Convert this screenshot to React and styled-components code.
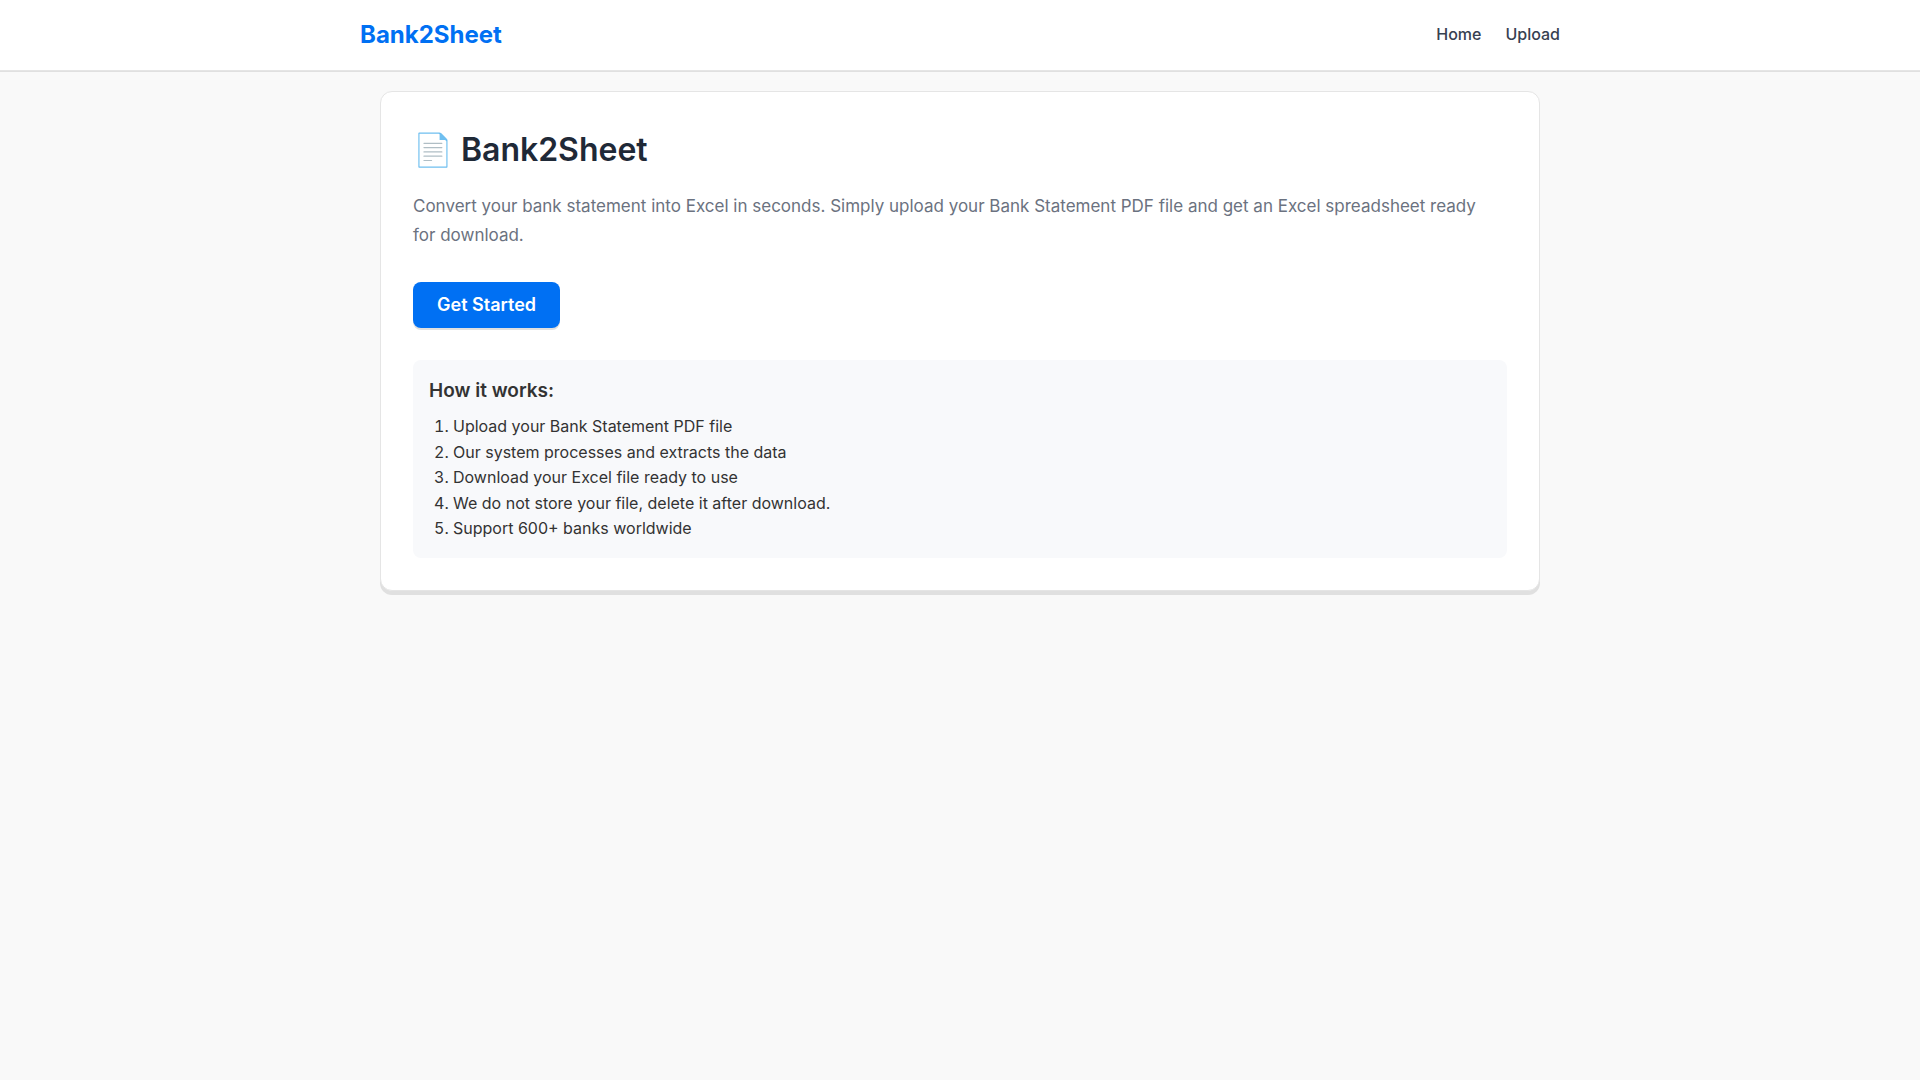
import React from "react";
import styled, { createGlobalStyle } from "styled-components";

const GlobalStyle = createGlobalStyle`
  * {
    box-sizing: border-box;
    margin: 0;
    padding: 0;
  }
  body {
    font-family: Inter, "Noto Color Emoji", sans-serif;
    font-size: 16px;
    line-height: 1.6;
    color: #333333;
    background: #f9f9f9;
  }
`;

const Header = styled.header`
  background: #ffffff;
  border-bottom: 1px solid #e5e5e5;
  box-shadow: 0 1px 0 #e0e0e0;
`;

const Bar = styled.div`
  display: flex;
  align-items: center;
  justify-content: space-between;
  max-width: 1200px;
  margin: 0 auto;
  padding: 16px 0;
`;

const Brand = styled.a`
  font-size: 24px;
  line-height: 38px;
  font-weight: 700;
  color: #0070f3;
  text-decoration: none;
`;

const Nav = styled.nav`
  display: flex;
  gap: 24px;
`;

const NavLink = styled.a`
  font-weight: 500;
  color: #374151;
  text-decoration: none;
`;

const Main = styled.main`
  max-width: 1200px;
  margin: 0 auto;
  padding: 20px;
`;

const Card = styled.section`
  padding: 32px;
  background: #ffffff;
  border: 1px solid #e5e5e5;
  border-radius: 12px;
  box-shadow: 0 4px 0 #e0e0e0;
`;

const Title = styled.h1`
  margin-bottom: 16px;
  font-size: 32px;
  line-height: 52px;
  font-weight: 600;
  color: #1f2937;
`;

const Lead = styled.p`
  margin-bottom: 32px;
  font-size: 17px;
  line-height: 29px;
  color: #6b7280;
`;

const StartButton = styled.button`
  display: block;
  margin-bottom: 32px;
  padding: 12px 24px;
  font-family: inherit;
  font-size: 18px;
  line-height: 22px;
  font-weight: 600;
  color: #ffffff;
  background: #0070f3;
  border: none;
  border-radius: 8px;
  box-shadow: 0 2px 0 #e0e0e0;
  cursor: pointer;
`;

const Panel = styled.section`
  padding: 16px;
  background: #f8f9fb;
  border-radius: 8px;
`;

const PanelTitle = styled.h2`
  margin-bottom: 8px;
  font-size: 19px;
  line-height: 30px;
  font-weight: 600;
`;

const Steps = styled.ol`
  padding-left: 24px;
`;

const steps = [
  "Upload your Bank Statement PDF file",
  "Our system processes and extracts the data",
  "Download your Excel file ready to use",
  "We do not store your file, delete it after download.",
  "Support 600+ banks worldwide",
];

export default function App() {
  return (
    <>
      <GlobalStyle />
      <Header>
        <Bar>
          <Brand href="#">Bank2Sheet</Brand>
          <Nav>
            <NavLink href="#">Home</NavLink>
            <NavLink href="#upload">Upload</NavLink>
          </Nav>
        </Bar>
      </Header>
      <Main>
        <Card>
          <Title>📄 Bank2Sheet</Title>
          <Lead>
            Convert your bank statement into Excel in seconds. Simply upload
            your Bank Statement PDF file and get an Excel spreadsheet ready
            for&nbsp;download.
          </Lead>
          <StartButton type="button">Get Started</StartButton>
          <Panel>
            <PanelTitle>How it works:</PanelTitle>
            <Steps>
              {steps.map((step) => (
                <li key={step}>{step}</li>
              ))}
            </Steps>
          </Panel>
        </Card>
      </Main>
    </>
  );
}
